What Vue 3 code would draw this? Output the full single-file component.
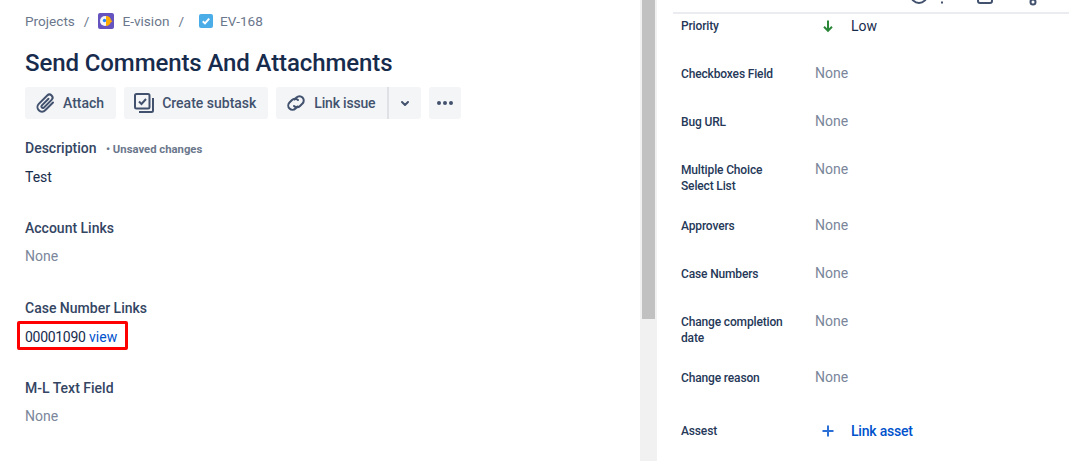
<template>
  <div class="page">
    <main class="left">
      <nav class="crumbs">
        <span>Projects</span>
        <span class="sep">/</span>
        <svg class="crumb-icon" width="16" height="16" viewBox="0 0 16 16">
          <rect width="16" height="16" rx="2" fill="#6554c0" />
          <circle cx="7" cy="8" r="5" fill="#f4f5f7" />
          <path d="M8 3a5 5 0 0 1 5 4l1.500 1.500-1.800 1A5 5 0 0 1 8 13z" fill="#ffab00" />
          <circle cx="6.500" cy="7.500" r="1.700" fill="#2684ff" />
        </svg>
        <span>E-vision</span>
        <span class="sep">/</span>
        <svg class="crumb-icon small" width="14" height="14" viewBox="0 0 14 14">
          <rect width="14" height="14" rx="2" fill="#4bade8" />
          <path d="M3.800 7.200l2.200 2.200 4.200-4.700" fill="none" stroke="#fff" stroke-width="2" />
        </svg>
        <span>EV-168</span>
      </nav>
      <h1 class="title">Send Comments And Attachments</h1>
      <div class="actions">
        <button class="btn">
          <svg width="24" height="24" viewBox="0 0 24 24" fill="none" stroke="#42526e" stroke-width="2" stroke-linecap="round">
            <path d="M20 11.500l-7.800 7.800a4.500 4.500 0 0 1-6.400-6.400l8.400-8.400a3.100 3.100 0 0 1 4.400 4.400l-7.800 7.800a1.500 1.500 0 0 1-2.100-2.100l6.800-6.800" />
          </svg>
          Attach
        </button>
        <button class="btn">
          <svg width="24" height="24" viewBox="0 0 24 24" fill="none" stroke="#42526e" stroke-width="2">
            <rect x="3" y="3" width="14.500" height="14.500" rx="1.500" />
            <path d="M7 10.500l2.500 2.500 4.500-5" />
            <path d="M21 7v12.500a1.500 1.500 0 0 1-1.500 1.500H7" />
          </svg>
          Create subtask
        </button>
        <div class="split">
          <button class="btn joined">
            <svg width="24" height="24" viewBox="0 0 24 24" fill="none" stroke="#42526e" stroke-width="2" stroke-linecap="round">
              <path d="M10.500 8.500l2-2a4.200 4.200 0 0 1 6 6l-2.500 2.500a4.200 4.200 0 0 1-6 0" />
              <path d="M13.500 15.500l-2 2a4.200 4.200 0 0 1-6-6L8 9a4.200 4.200 0 0 1 6 0" />
            </svg>
            Link issue
          </button>
          <button class="btn chevron">
            <svg width="16" height="16" viewBox="0 0 16 16" fill="none" stroke="#42526e" stroke-width="2" stroke-linecap="round" stroke-linejoin="round">
              <path d="M5 7l3 3 3-3" />
            </svg>
          </button>
        </div>
        <button class="btn more" aria-label="More">
          <i></i><i></i><i></i>
        </button>
      </div>

      <section class="field first">
        <h2>Description <small>• Unsaved changes</small></h2>
        <p class="dark">Test</p>
      </section>
      <section class="field">
        <h2>Account Links</h2>
        <p class="none">None</p>
      </section>
      <section class="field links">
        <h2>Case Number Links</h2>
        <p class="dark"><span class="marked"><span class="num">00001090</span> <a>view</a></span></p>
      </section>
      <section class="field">
        <h2>M-L Text Field</h2>
        <p class="none">None</p>
      </section>
    </main>

    <div class="scrollbar"><div class="thumb"></div></div>

    <aside class="right">
      <div class="top-icons">
        <svg class="clipped one" width="40" height="24" viewBox="0 0 40 24" fill="none" stroke="#42526e" stroke-width="2">
          <circle cx="12" cy="12" r="8" />
          <path d="M34 19.500h2" />
        </svg>
        <svg class="clipped two" width="24" height="24" viewBox="0 0 24 24" fill="none" stroke="#42526e" stroke-width="2">
          <path d="M5 10v7a2 2 0 0 0 2 2h10a2 2 0 0 0 2-2v-7" />
          <path d="M9 10v5" />
        </svg>
        <svg class="clipped three" width="24" height="24" viewBox="0 0 24 24" fill="none" stroke="#42526e" stroke-width="2">
          <circle cx="17" cy="17" r="2.500" />
          <path d="M8 8l7 7" />
        </svg>
      </div>
      <dl class="rows">
        <div v-for="row in rows" :key="row.label" class="row" :class="row.cls">
          <dt>{{ row.label }}</dt>
          <dd v-if="row.cls === 'priority'" class="with-icon">
            <svg width="16" height="16" viewBox="0 0 16 16" fill="none" stroke="#2a8737" stroke-width="2"><path d="M8 2.500v10M4 8.800l4 4 4-4" /></svg>
            <span class="dark">Low</span>
          </dd>
          <dd v-else-if="row.cls === 'asset'" class="with-icon">
            <svg width="16" height="16" viewBox="0 0 16 16" fill="none" stroke="#2c6fd6" stroke-width="2"><path d="M8 2.500v11M2.500 8h11" /></svg>
            <a>Link asset</a>
          </dd>
          <dd v-else class="none">None</dd>
        </div>
      </dl>
    </aside>
  </div>
</template>

<script setup>
const rows = [
  { label: 'Priority', cls: 'priority' },
  { label: 'Checkboxes Field' },
  { label: 'Bug URL' },
  { label: 'Multiple Choice Select List', cls: 'tall' },
  { label: 'Approvers' },
  { label: 'Case Numbers' },
  { label: 'Change completion date', cls: 'tall' },
  { label: 'Change reason' },
  { label: 'Assest', cls: 'asset' }
]
</script>

<style>
html, body {
  margin: 0;
  overflow: hidden;
  background: #fff;
}
</style>

<style scoped>
.page {
  display: flex;
  width: 1069px;
  height: 461px;
  overflow: hidden;
  font-family: Roboto, "Noto Sans", sans-serif;
  font-size: 14px;
  color: #172b4d;
}

.left {
  width: 640px;
  box-sizing: border-box;
  padding: 12px 0 0 25px;
}

.crumbs {
  display: flex;
  align-items: center;
  height: 18px;
  color: #6b778c;
  font-size: 13.6px;
}

.sep {
  margin: 0 9px;
}

.crumb-icon {
  margin-right: 8px;
}

.crumb-icon.small {
  margin: 0 7px 0 6px;
}

.title {
  margin: 17px 0 0;
  font-size: 24px;
  line-height: 32px;
  font-weight: 500;
  letter-spacing: -0.1px;
  color: #172b4d;
}

.actions {
  display: flex;
  gap: 8px;
  margin-top: 8px;
}

.btn {
  display: flex;
  align-items: center;
  gap: 6px;
  height: 32px;
  padding: 0 12px 0 8px;
  border: 0;
  border-radius: 3px;
  background: #f4f5f7;
  color: #42526e;
  font: 500 14px Roboto, sans-serif;
}

.split {
  display: flex;
}

.joined {
  padding-right: 12px;
  border-radius: 3px 0 0 3px;
  border-right: 2px solid #dfe1e6;
  letter-spacing: -0.2px;
}

.chevron {
  width: 32px;
  padding: 0;
  justify-content: center;
  border-radius: 0 3px 3px 0;
}

.more {
  width: 32px;
  padding: 0;
  justify-content: center;
  gap: 2px;
}

.more i {
  width: 4px;
  height: 4px;
  border-radius: 50%;
  background: #42526e;
}

.field {
  margin-top: 31px;
}

.field.first {
  margin-top: 19px;
}

.field.links {
  margin-top: 32px;
}

.field h2 {
  margin: 0;
  height: 20px;
  font-size: 14px;
  line-height: 20px;
  font-weight: 500;
  color: #344563;
}

.field h2 small {
  margin-left: 6px;
  font-size: 11.3px;
  font-weight: 700;
  color: #6b778c;
}

.field p {
  margin: 8px 0 0;
  line-height: 20px;
}

.field.first p,
.field.links p {
  margin-top: 9px;
}

.dark {
  color: #172b4d;
}

.none {
  color: #7a869a;
}

.marked {
  position: relative;
  display: inline-block;
}

.marked::after {
  content: '';
  position: absolute;
  inset: -6px -11px -3px -8px;
  border: 3px solid #f00;
  border-radius: 2px;
}

.num {
  letter-spacing: -0.3px;
}

a {
  color: #0052cc;
}

.scrollbar {
  width: 17px;
  height: 461px;
  background: #f1f1f1;
  flex: none;
}

.thumb {
  width: 13px;
  height: 319px;
  margin-left: 2px;
  background: #c1c1c1;
}

.right {
  flex: 1;
  box-sizing: border-box;
  padding-left: 16px;
}

.top-icons {
  position: relative;
  height: 12px;
  border-bottom: 2px solid #ebecf0;
  overflow: hidden;
}

.clipped {
  position: absolute;
}

.clipped.one { left: 234px; top: -17px; }
.clipped.two { left: 300px; top: -16px; }
.clipped.three { left: 343px; top: -15px; }

.rows {
  margin: 0;
  padding: 2px 0 0 8px;
}

.row {
  display: flex;
  height: 48px;
}

.row.tall {
  height: 56px;
}

.row.asset {
  margin-top: 5px;
}

.row dt {
  width: 134px;
  padding-top: 2px;
  padding-right: 24px;
  box-sizing: border-box;
  font-size: 12px;
  line-height: 16px;
  font-weight: 500;
  letter-spacing: -0.15px;
  color: #253858;
}

.row dd {
  margin: 0;
  line-height: 20px;
}

.row dd.none {
  margin-top: -1px;
}

.with-icon {
  display: flex;
  align-items: center;
  gap: 15px;
  padding-left: 5px;
  height: 20px;
}

.with-icon a {
  font-weight: 500;
  letter-spacing: -0.2px;
}
</style>
